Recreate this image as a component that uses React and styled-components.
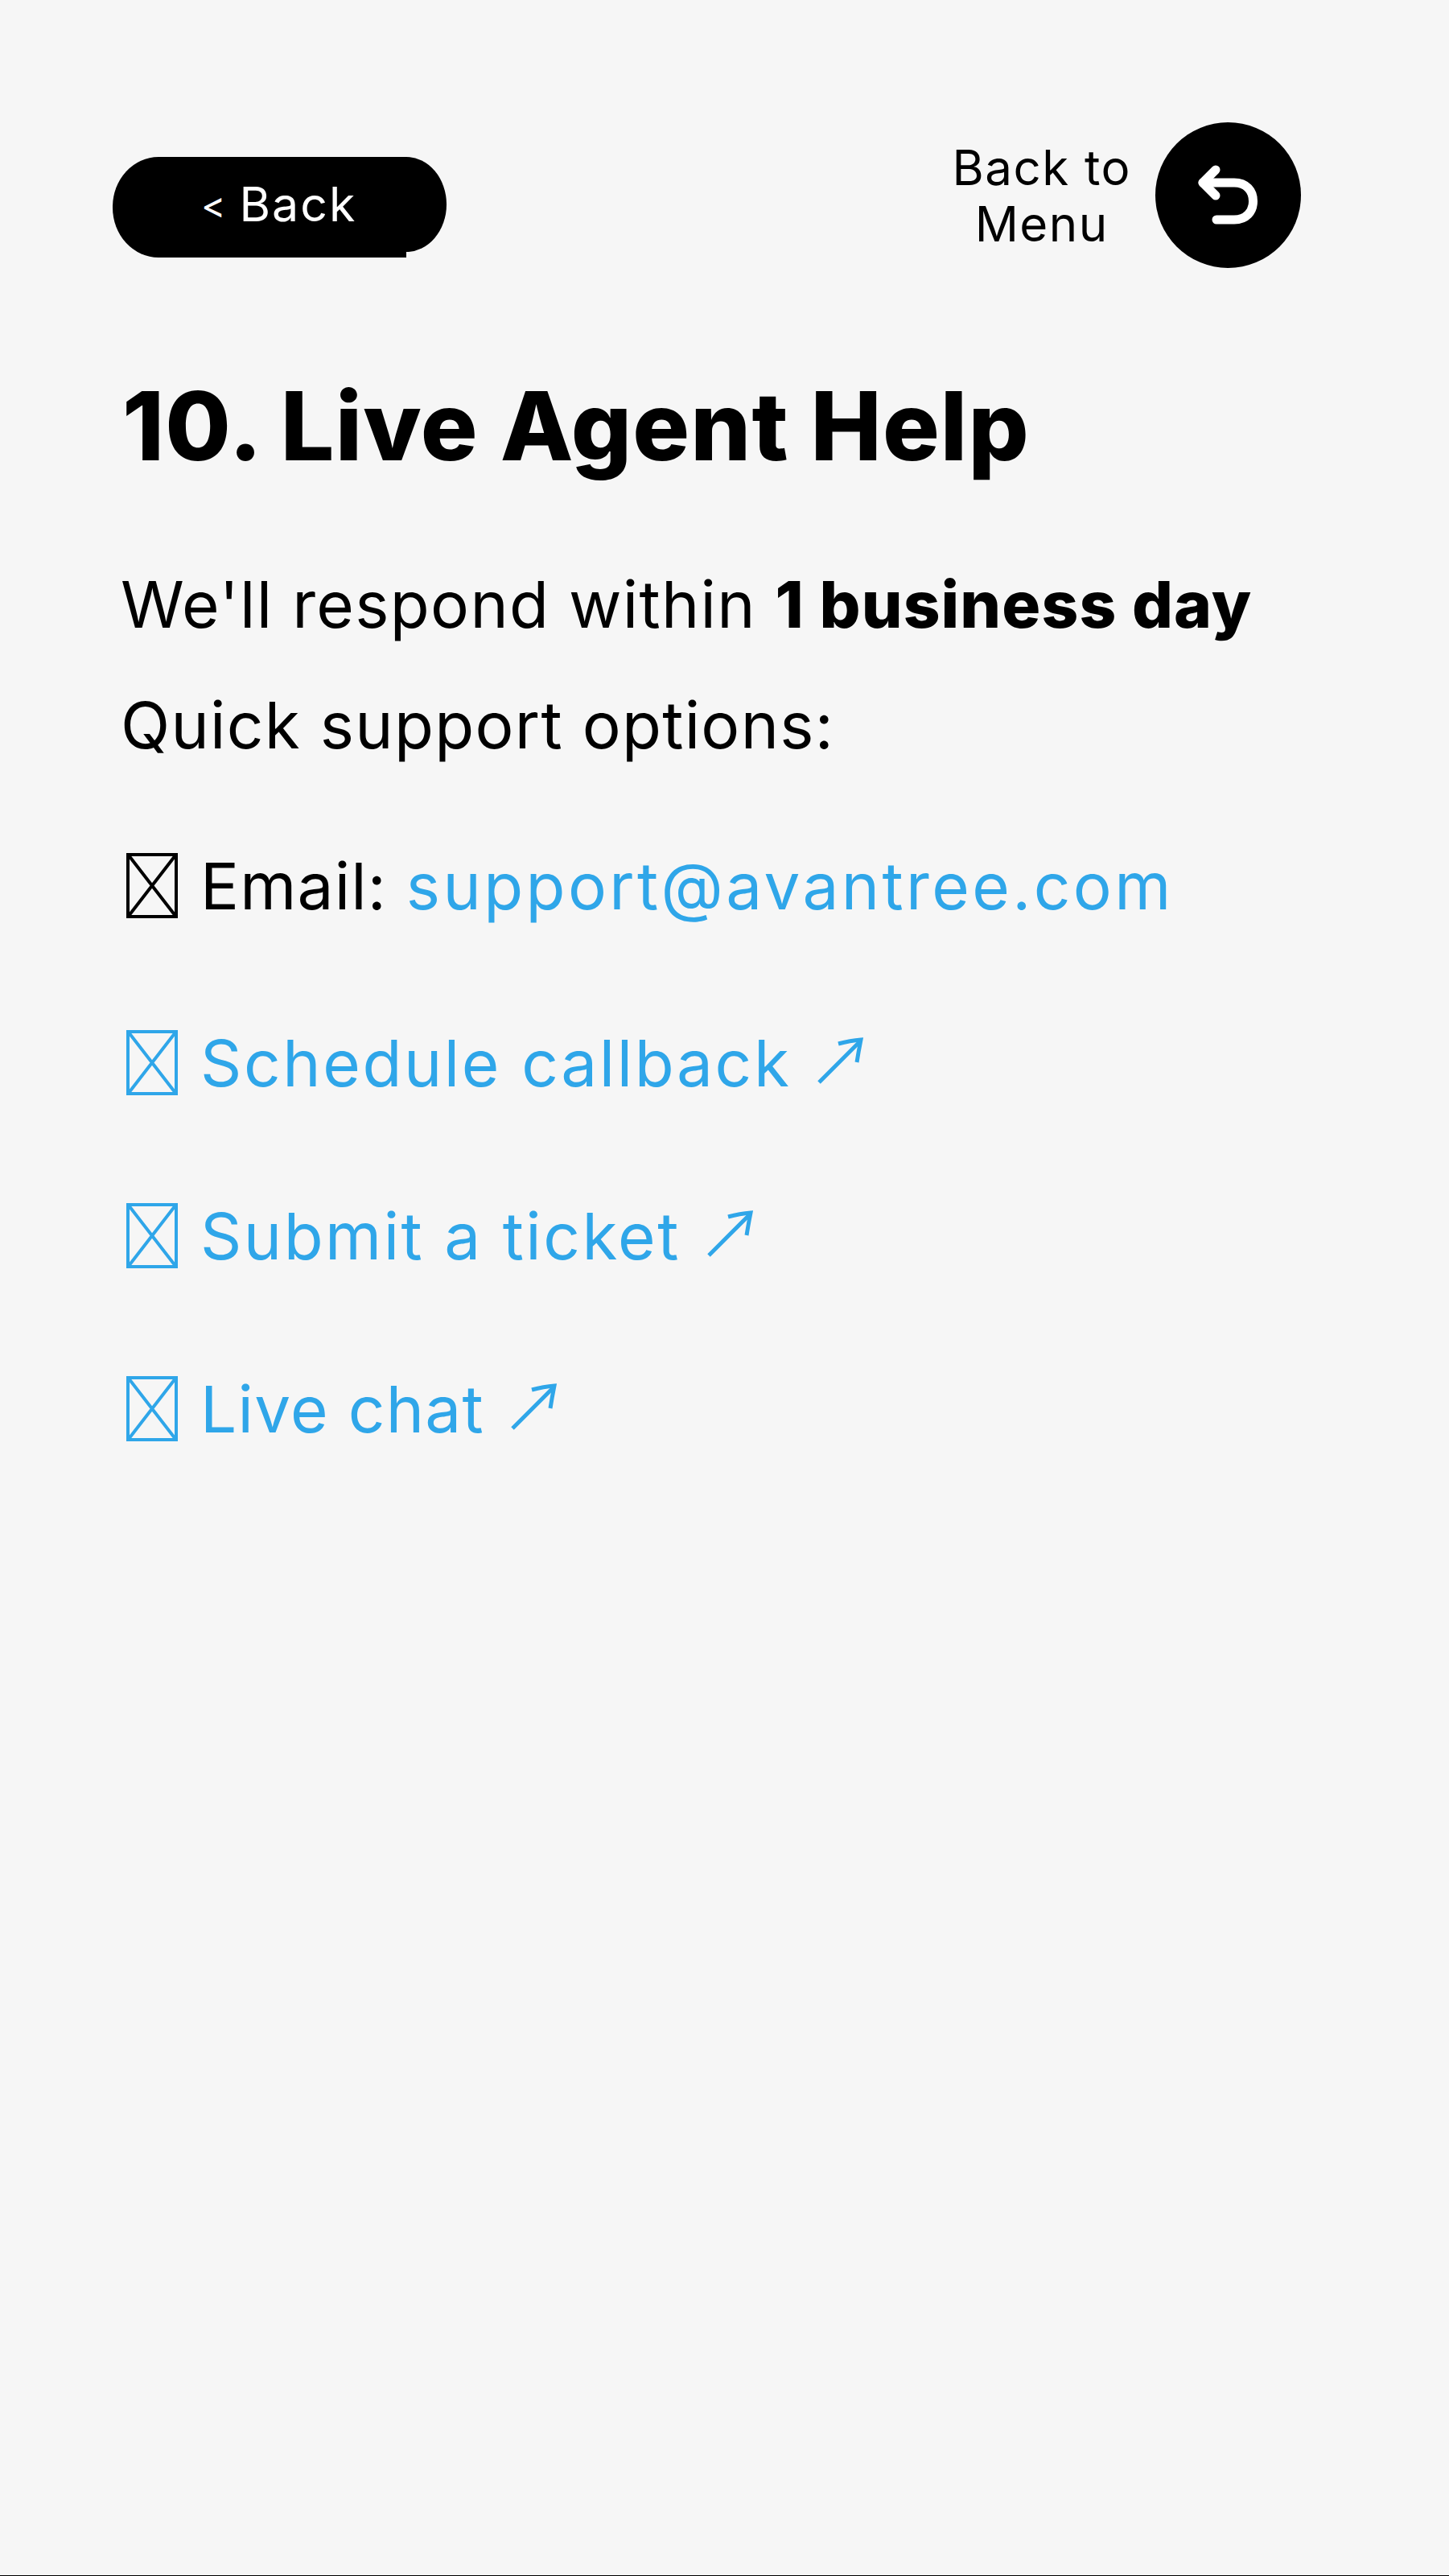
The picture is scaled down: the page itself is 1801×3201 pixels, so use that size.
import React from 'react';
import styled, { createGlobalStyle } from 'styled-components';

const GlobalStyle = createGlobalStyle`
  html, body {
    margin: 0;
    padding: 0;
    background: #f6f6f6;
  }
  body {
    font-family: "Inter", "Liberation Sans", sans-serif;
    color: #000;
  }
`;

const Page = styled.div`
  box-sizing: border-box;
  width: 1801px;
  height: 3201px;
  padding: 152px 184px 0 140px;
  background: #f6f6f6;
  border-bottom: 1px solid #000;
`;

const TopBar = styled.div`
  display: flex;
  justify-content: space-between;
  align-items: flex-start;
`;

const BackButton = styled.a`
  display: flex;
  align-items: flex-start;
  margin-top: 43px;
  color: #fff;
  &::after {
    content: '';
    width: 50px;
    height: 118px;
    background: #000;
    border-radius: 0 50px 50px 0 / 0 59px 59px 0;
  }
`;

const BackLabel = styled.span`
  box-sizing: border-box;
  display: flex;
  align-items: center;
  gap: 17px;
  width: 365px;
  height: 125px;
  padding: 0 0 8px 110px;
  background: #000;
  border-radius: 57px 0 0 57px / 62px 0 0 62px;
  font-size: 59px;
  letter-spacing: 2px;
  white-space: nowrap;
`;

const Chevron = styled.span`
  font-size: 46px;
  letter-spacing: 0;
`;

const MenuLink = styled.a`
  display: flex;
  align-items: center;
  gap: 30px;
`;

const MenuText = styled.span`
  text-align: center;
  font-size: 60px;
  line-height: 70px;
  letter-spacing: 1.5px;
`;

const MenuCircle = styled.span`
  display: flex;
  align-items: center;
  justify-content: center;
  width: 181px;
  height: 181px;
  border-radius: 50%;
  background: #000;
`;

const Title = styled.h1`
  margin: 126px 0 0 12px;
  font-size: 118px;
  line-height: 140px;
  font-weight: 800;
  letter-spacing: 1.1px;
  white-space: nowrap;
`;

const Paragraph = styled.p`
  margin: ${props => props.$top}px 0 0 10px;
  font-size: 80px;
  line-height: 120px;
  font-weight: 400;
  letter-spacing: 1.3px;
  white-space: nowrap;
  b {
    font-weight: 800;
    letter-spacing: 1.1px;
  }
`;

const Options = styled.ul`
  list-style: none;
  margin: 79px 0 0 17px;
  padding: 0;
  display: flex;
  flex-direction: column;
  gap: 95px;
`;

const Option = styled.li`
  display: flex;
  align-items: center;
  gap: 28px;
  height: 120px;
  font-size: 80px;
  letter-spacing: ${props => props.$spacing}px;
  white-space: nowrap;
  color: ${props => (props.$link ? '#2fa6e9' : '#000')};
  &:first-child {
    margin-bottom: 5px;
  }
`;

const Link = styled.a`
  color: #2fa6e9;
  letter-spacing: 3.4px;
`;

const ArrowWrap = styled.span`
  display: flex;
  margin: 0 0 2px 4px;
`;

const Tofu = () => (
  <svg width="64" height="81" viewBox="0 0 64 81" fill="none" stroke="currentColor" strokeWidth="4">
    <rect x="2" y="2" width="60" height="77" />
    <path d="M3 3 L61 78 M61 3 L3 78" />
  </svg>
);

const OutArrow = () => (
  <ArrowWrap>
    <svg width="60" height="60" viewBox="0 0 60 60" fill="none" stroke="currentColor" strokeWidth="5">
      <path d="M3 56 L54 5" />
      <path d="M27 8 Q42 4 55 3 Q52 18 50 31" />
    </svg>
  </ArrowWrap>
);

const ReturnIcon = () => (
  <svg width="85" height="85" viewBox="0 0 85 85" fill="none" stroke="#fff" strokeWidth="11" strokeLinecap="round" strokeLinejoin="round">
    <path d="M27 11 L11 27 L27 43" />
    <path d="M11 27 H50 C65 27 73.5 37 73.5 50 C73.5 63 65 73 50 73 H28" />
  </svg>
);

export default function App() {
  return (
    <Page>
      <GlobalStyle />
      <TopBar>
        <BackButton>
          <BackLabel><Chevron>&lt;</Chevron><span>Back</span></BackLabel>
        </BackButton>
        <MenuLink>
          <MenuText>Back to<br />Menu</MenuText>
          <MenuCircle><ReturnIcon /></MenuCircle>
        </MenuLink>
      </TopBar>
      <Title>10. Live Agent Help</Title>
      <Paragraph $top={92}>We'll respond within <b>1 business day</b></Paragraph>
      <Paragraph $top={30}>Quick support options:</Paragraph>
      <Options>
        <Option $spacing={1.2}><Tofu /><span>Email: <Link>support@avantree.com</Link></span></Option>
        <Option $link $spacing={2.6}><Tofu /><span>Schedule callback</span><OutArrow /></Option>
        <Option $link $spacing={2.5}><Tofu /><span>Submit a ticket</span><OutArrow /></Option>
        <Option $link $spacing={1.3}><Tofu /><span>Live chat</span><OutArrow /></Option>
      </Options>
    </Page>
  );
}
